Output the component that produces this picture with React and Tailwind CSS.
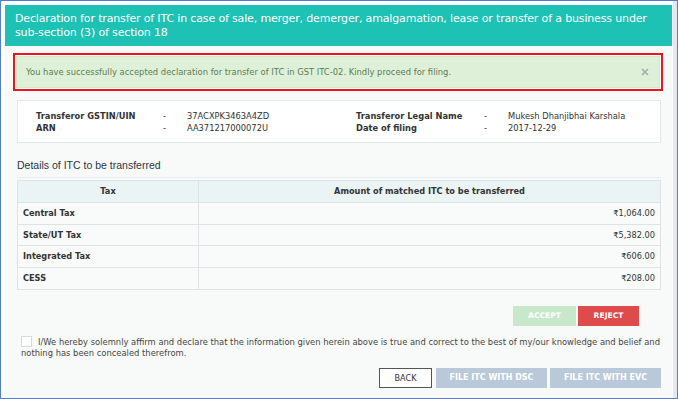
import React from "react";

const V = { fontFamily: '"DejaVu Sans", Verdana, sans-serif' };
const A = { fontFamily: '"Liberation Sans", Arial, sans-serif' };

export default function App() {
  const rows = [
    ["Central Tax", "₹1,064.00"],
    ["State/UT Tax", "₹5,382.00"],
    ["Integrated Tax", "₹606.00"],
    ["CESS", "₹208.00"],
  ];
  return (
    <div className="w-[678px] h-[399px] border border-[#4f7fcf] bg-white flex overflow-hidden" style={V}>
      <div className="w-[671px] h-full pl-[4px] pt-[4px] flex flex-col">
        <div className="h-[41px] bg-[#1dc2b4] text-white text-[11px] leading-[14px] pl-[10px] pt-[7px] tracking-[-0.15px] whitespace-nowrap">
          Declaration for transfer of ITC in case of sale, merger, demerger, amalgamation, lease or transfer of a business under
          <br />
          sub-section (3) of section 18
        </div>
        <div className="flex-1 bg-[#f8fafa] flex flex-col">
          <div className="ml-[8px] mt-[7px] w-[650px] h-[38px] border-2 border-[#e8161f] p-[1px] bg-white">
            <div className="h-full bg-[#dff0d8] border border-[#d4e6cc] flex items-center justify-between pl-[9px] pr-[10px]">
              <span className="text-[8.4px] text-[#5a7d52]">
                You have successfully accepted declaration for transfer of ITC in GST ITC-02. Kindly proceed for filing.
              </span>
              <svg width="8" height="8" viewBox="0 0 8 8">
                <path d="M1 1L7 7M7 1L1 7" stroke="#a6aea3" strokeWidth="1.6" />
              </svg>
            </div>
          </div>
          <div className="ml-[12px] mt-[9px] w-[644px] h-[43px] bg-white border border-[#e3e8ea] flex items-center text-[8.3px] text-[#333] leading-[12px]">
            <div className="flex flex-col pl-[18px] w-[338px]">
              <div className="flex"><span className="font-bold w-[127px]">Transferor GSTIN/UIN</span><span className="w-[24px]">-</span><span>37ACXPK3463A4ZD</span></div>
              <div className="flex"><span className="font-bold w-[127px]">ARN</span><span className="w-[24px]">-</span><span>AA371217000072U</span></div>
            </div>
            <div className="flex flex-col">
              <div className="flex"><span className="font-bold w-[128px]">Transferor Legal Name</span><span className="w-[24px]">-</span><span>Mukesh Dhanjibhai Karshala</span></div>
              <div className="flex"><span className="font-bold w-[128px]">Date of filing</span><span className="w-[24px]">-</span><span>2017-12-29</span></div>
            </div>
          </div>
          <div className="ml-[12px] mt-[15px] text-[10.5px] text-[#2b3441] leading-[14px]" style={A}>
            Details of ITC to be transferred
          </div>
          <div className="ml-[12px] mt-[5px] w-[644px] h-px bg-[#e6eded]" />
          <div className="ml-[12px] mt-[2px] w-[644px] border border-[#dde4e6] text-[8.2px] text-[#333]">
            <div className="flex h-[22px] bg-[#eaf4f4] font-bold border-b border-[#dde4e6]">
              <div className="w-[181px] border-r border-[#dde4e6] flex items-center justify-center">Tax</div>
              <div className="flex-1 flex items-center justify-center">Amount of matched ITC to be transferred</div>
            </div>
            {rows.map(([t, v], i) => (
              <div key={t} className={"flex h-[21.5px] bg-[#f9fbfb] " + (i < 3 ? "border-b border-[#dde4e6]" : "")}>
                <div className="w-[181px] border-r border-[#dde4e6] flex items-center pl-[5px] font-bold">{t}</div>
                <div className="flex-1 flex items-center justify-end pr-[5px]">{v}</div>
              </div>
            ))}
          </div>
          <div className="mt-[16px] flex justify-end pr-[33px] gap-[2px]">
            <button className="w-[63px] h-[20px] bg-[#c8e8cb] text-white text-[7.6px] font-bold">ACCEPT</button>
            <button className="w-[61px] h-[20px] bg-[#df4a4b] text-white text-[7.6px] font-bold">REJECT</button>
          </div>
          <div className="ml-[16px] mt-[10px] w-[640px] text-[8.4px] leading-[11px] text-[#444]">
            <span className="inline-block w-[11px] h-[11px] border border-[#d5dadd] bg-white align-[-2px] mr-[6px]" />
            I/We hereby solemnly affirm and declare that the information given herein above is true and correct to the best of my/our knowledge and belief and nothing has been concealed therefrom.
          </div>
          <div className="mt-[9px] flex justify-end pr-[11px] gap-[3px]">
            <button className="w-[53px] h-[20px] bg-white border border-[#555] text-[#333] text-[8.1px] mr-[1px]">BACK</button>
            <button className="w-[111px] h-[20px] bg-[#b9c9da] text-white text-[8px] font-bold">FILE ITC WITH DSC</button>
            <button className="w-[111px] h-[20px] bg-[#b9c9da] text-white text-[8px] font-bold">FILE ITC WITH EVC</button>
          </div>
        </div>
      </div>
      <div className="w-px h-full bg-white" />
      <div className="w-[4px] h-full bg-[#e4e8eb]" />
    </div>
  );
}
